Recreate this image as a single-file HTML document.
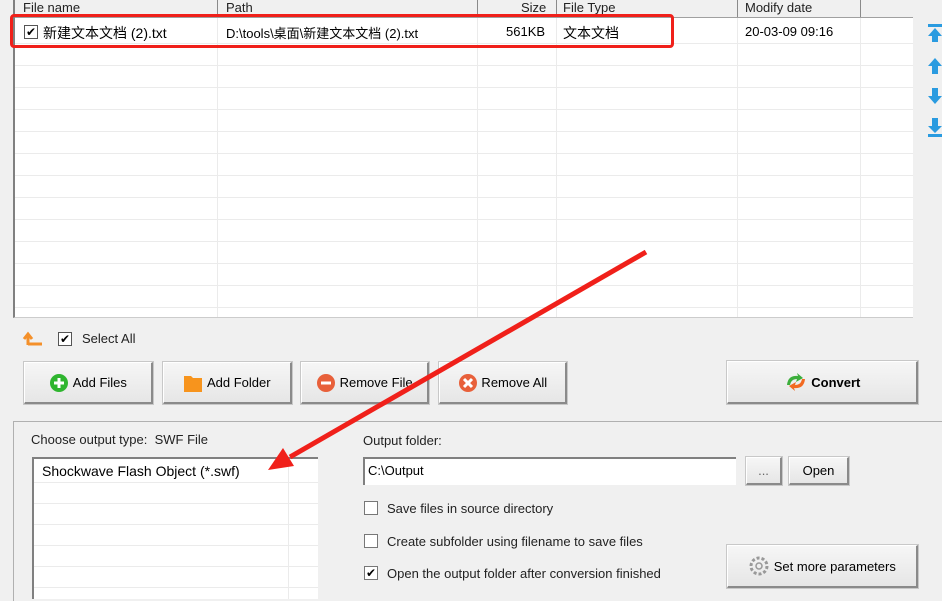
<!DOCTYPE html><html><head><style>
body{margin:0;width:942px;height:601px;background:#f0f0f0;font-family:"Liberation Sans","Noto Sans CJK SC",sans-serif;font-size:13px;color:#000;position:relative;overflow:hidden}
.a{position:absolute}
.btn{position:absolute;background:linear-gradient(#f6f6f6,#e6e6e6);border:1px solid #fff;border-right:2px solid #8a8a8a;border-bottom:2px solid #8a8a8a;box-shadow:0 0 0 1px #c8c8c8;display:flex;align-items:center;justify-content:center;font-size:13px;box-sizing:border-box}
.cb{position:absolute;width:12px;height:12px;border:1px solid #777;background:#fff;font-size:12px;line-height:12px;text-align:center}
</style></head><body>
<div class="a" style="left:13px;top:0;width:900px;height:318px;background:#fff;border-left:2px solid #808080;border-bottom:1px solid #ccc;box-sizing:border-box;overflow:hidden">
<svg class="a" style="left:0;top:0" width="900" height="318">
<rect x="0" y="0" width="900" height="17" fill="#f0f0f0"/>
<line x1="0" y1="17.5" x2="900" y2="17.5" stroke="#a0a0a0"/>
<g stroke="#8a8a8a"><line x1="202.5" y1="0" x2="202.5" y2="17"/><line x1="462.5" y1="0" x2="462.5" y2="17"/><line x1="541.5" y1="0" x2="541.5" y2="17"/><line x1="722.5" y1="0" x2="722.5" y2="17"/><line x1="845.5" y1="0" x2="845.5" y2="17"/></g>
<g stroke="#ebebeb"><line x1="202.5" y1="18" x2="202.5" y2="318"/><line x1="462.5" y1="18" x2="462.5" y2="318"/><line x1="541.5" y1="18" x2="541.5" y2="318"/><line x1="722.5" y1="18" x2="722.5" y2="318"/><line x1="845.5" y1="18" x2="845.5" y2="318"/>
<line x1="0" y1="43.5" x2="900" y2="43.5"/><line x1="0" y1="65.5" x2="900" y2="65.5"/><line x1="0" y1="87.5" x2="900" y2="87.5"/><line x1="0" y1="109.5" x2="900" y2="109.5"/><line x1="0" y1="131.5" x2="900" y2="131.5"/><line x1="0" y1="153.5" x2="900" y2="153.5"/><line x1="0" y1="175.5" x2="900" y2="175.5"/><line x1="0" y1="197.5" x2="900" y2="197.5"/><line x1="0" y1="219.5" x2="900" y2="219.5"/><line x1="0" y1="241.5" x2="900" y2="241.5"/><line x1="0" y1="263.5" x2="900" y2="263.5"/><line x1="0" y1="285.5" x2="900" y2="285.5"/><line x1="0" y1="307.5" x2="900" y2="307.5"/></g>
</svg>
<div class="a" style="left:8px;top:0;line-height:15px;color:#222">File name</div>
<div class="a" style="left:211px;top:0;line-height:15px;color:#222">Path</div>
<div class="a" style="left:506px;top:0;line-height:15px;color:#222">Size</div>
<div class="a" style="left:548px;top:0;line-height:15px;color:#222">File Type</div>
<div class="a" style="left:730px;top:0;line-height:15px;color:#222">Modify date</div>
<div class="cb" style="left:9px;top:25px;border-color:#555">✔</div>
<div class="a" style="left:28px;top:23px;font-size:14px">新建文本文档 (2).txt</div>
<div class="a" style="left:211px;top:23px;font-size:13px">D:\tools\桌面\新建文本文档 (2).txt</div>
<div class="a" style="left:491px;top:24px">561KB</div>
<div class="a" style="left:548px;top:23px;font-size:14px">文本文档</div>
<div class="a" style="left:730px;top:24px">20-03-09 09:16</div>
</div>
<div class="a" style="left:10px;top:14px;width:658px;height:28px;border:3px solid #f0201a;border-radius:4px"></div>
<svg class="a" style="left:926px;top:22px" width="16" height="120">
<g fill="#2a9be0"><rect x="2" y="2" width="14" height="3"/><path d="M2 14 L9 6 L16 14 L12 14 L12 20 L6 20 L6 14Z"/>
<path d="M2 44 L9 36 L16 44 L12 44 L12 52 L6 52 L6 44Z"/>
<path d="M6 66 L12 66 L12 74 L16 74 L9 82 L2 74 L6 74Z"/>
<path d="M6 96 L12 96 L12 104 L16 104 L9 111 L2 104 L6 104Z"/><rect x="2" y="112" width="14" height="3"/></g></svg>
<svg class="a" style="left:22px;top:331px" width="22" height="16"><path d="M6 14 L6 5 M2 8 L6 3 L10 8 M6 13 L20 13" stroke="#f4902a" stroke-width="3" fill="none"/></svg>
<div class="cb" style="left:58px;top:332px;border-color:#555">✔</div>
<div class="a" style="left:82px;top:331px;color:#222">Select All</div>
<div class="btn" style="left:24px;top:362px;width:129px;height:42px"><svg width="20" height="20"><circle cx="10" cy="10" r="9" fill="#2fb52f"/><path d="M10 5V15M5 10H15" stroke="#fff" stroke-width="3"/></svg>&nbsp;Add Files</div>
<div class="btn" style="left:163px;top:362px;width:129px;height:42px"><svg width="20" height="20"><path d="M1 3H8L10 5H19V19H1Z" fill="#f7941d"/></svg>&nbsp;Add Folder</div>
<div class="btn" style="left:301px;top:362px;width:128px;height:42px;justify-content:flex-start;padding-left:14px"><svg width="20" height="20"><circle cx="10" cy="10" r="9" fill="#e8603a"/><path d="M5 10H15" stroke="#fff" stroke-width="3"/></svg>&nbsp;Remove File</div>
<div class="btn" style="left:439px;top:362px;width:128px;height:42px"><svg width="20" height="20"><circle cx="10" cy="10" r="9" fill="#e8603a"/><path d="M6 6L14 14M14 6L6 14" stroke="#fff" stroke-width="3"/></svg>&nbsp;Remove All</div>
<div class="btn" style="left:727px;top:361px;width:191px;height:43px;font-weight:bold"><svg width="24" height="22"><path d="M3 14 Q4 4 14 5 L13 2 L19 7 L12 11 L13 8 Q7 8 6 14Z" fill="#3cae3c"/><path d="M21 8 Q20 18 10 17 L11 20 L5 15 L12 11 L11 14 Q17 14 18 8Z" fill="#f26a21"/></svg>&nbsp;Convert</div>
<div class="a" style="left:13px;top:421px;width:929px;height:1px;background:#b0b0b0"></div>
<div class="a" style="left:13px;top:421px;width:1px;height:180px;background:#b0b0b0"></div>
<div class="a" style="left:31px;top:432px;color:#222">Choose output type:&nbsp; SWF File</div>
<div class="a" style="left:32px;top:457px;width:286px;height:142px;background:#fff;border-left:2px solid #808080;border-top:2px solid #808080;box-sizing:border-box">
<svg class="a" style="left:0;top:0" width="284" height="140"><g stroke="#ebebeb"><line x1="254.5" y1="0" x2="254.5" y2="140"/><line x1="0" y1="23.5" x2="284" y2="23.5"/><line x1="0" y1="44.5" x2="284" y2="44.5"/><line x1="0" y1="65.5" x2="284" y2="65.5"/><line x1="0" y1="86.5" x2="284" y2="86.5"/><line x1="0" y1="107.5" x2="284" y2="107.5"/><line x1="0" y1="128.5" x2="284" y2="128.5"/></g></svg>
<div class="a" style="left:8px;top:4px;font-size:14px">Shockwave Flash Object (*.swf)</div></div>
<div class="a" style="left:363px;top:433px;color:#222">Output folder:</div>
<div class="a" style="left:363px;top:457px;width:373px;height:28px;background:#fff;border-top:2px solid #808080;border-left:2px solid #808080;box-sizing:border-box;padding:4px 3px;font-size:13px">C:\Output</div>
<div class="btn" style="left:746px;top:457px;width:36px;height:28px;color:#666">...</div>
<div class="btn" style="left:789px;top:457px;width:60px;height:28px">Open</div>
<div class="cb" style="left:364px;top:501px"></div><div class="a" style="left:387px;top:501px;color:#222">Save files in source directory</div>
<div class="cb" style="left:364px;top:534px"></div><div class="a" style="left:387px;top:534px;color:#222">Create subfolder using filename to save files</div>
<div class="cb" style="left:364px;top:566px">✔</div><div class="a" style="left:387px;top:566px;color:#222">Open the output folder after conversion finished</div>
<div class="btn" style="left:727px;top:545px;width:191px;height:43px"><svg width="22" height="22"><circle cx="11" cy="11" r="8" fill="none" stroke="#999" stroke-width="3" stroke-dasharray="3 2"/><circle cx="11" cy="11" r="3" fill="none" stroke="#999" stroke-width="1.5"/></svg>&nbsp;Set more parameters</div>
<svg class="a" style="left:0;top:0" width="942" height="601"><line x1="646" y1="252" x2="290" y2="457" stroke="#f0201a" stroke-width="5"/><path d="M268 470 L283 448 L294 466Z" fill="#f0201a"/></svg>
</body></html>
